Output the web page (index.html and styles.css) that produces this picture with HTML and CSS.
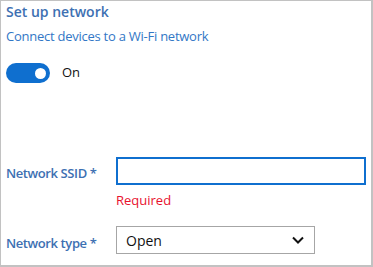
FILE: index.html
```html
<!DOCTYPE html>
<html lang="en">
<head>
    <meta charset="UTF-8">
    <meta name="viewport" content="width=device-width, initial-scale=1.0">
    <title>Set up network</title>
    <link rel="stylesheet" href="styles.css">
</head>
<body>
    <div class="panel">
        <h1 class="titel">Set up network</h1>
        <p class="untertitel">Connect devices to a Wi-Fi network</p>

        <div class="schalter-zeile">
            <span class="schalter"><span class="knopf"></span></span>
            <span class="schalter-text">On</span>
        </div>

        <div class="feld feld-ssid">
            <label class="feld-label" for="ssid">Network SSID<span class="stern">*</span></label>
            <div class="feld-inhalt">
                <input class="eingabe" id="ssid" type="text">
                <div class="fehler">Required</div>
            </div>
        </div>

        <div class="feld feld-typ">
            <label class="feld-label">Network type<span class="stern">*</span></label>
            <div class="auswahl">
                <span>Open</span>
                <svg width="12" height="8" viewBox="0 0 12 8">
                    <path d="M1 1.5 L6 6.5 L11 1.5" fill="none" stroke="#111" stroke-width="2"/>
                </svg>
            </div>
        </div>
    </div>
</body>
</html>
```

FILE: styles.css
```css
body {
    margin: 0;
    font-family: "Open Sans", "Noto Sans", sans-serif;
    background-color: white;
}

.panel {
    box-sizing: border-box;
    width: 373px;
    height: 267px;
    padding: 1px 5px 0 5px;
    border: 1px solid #c2c2c2;
    border-right-width: 2px;
    border-bottom-width: 2px;
    display: flex;
    flex-direction: column;
}

.titel {
    margin: 0;
    font-size: 14px;
    line-height: 20px;
    font-weight: 600;
    color: #3d70b2;
}

.untertitel {
    margin: 5px 0 0 0;
    font-size: 13px;
    line-height: 18px;
    letter-spacing: -0.25px;
    color: #3277c6;
}

.schalter-zeile {
    margin-top: 18px;
    display: flex;
    align-items: flex-start;
}

.schalter {
    width: 44px;
    height: 20px;
    border-radius: 10px;
    background-color: #0f6fcf;
    display: flex;
    align-items: center;
    justify-content: flex-end;
    padding-right: 4px;
    box-sizing: border-box;
}

.knopf {
    width: 11px;
    height: 11px;
    border-radius: 50%;
    background-color: white;
}

.schalter-text {
    margin-left: 12px;
    font-size: 13px;
    line-height: 18px;
    color: #111;
}

.feld {
    display: flex;
    align-items: flex-start;
}

.feld-ssid {
    margin-top: 74px;
}

.feld-typ {
    margin-top: 17px;
}

.feld-label {
    width: 110px;
    flex-shrink: 0;
    font-size: 13px;
    line-height: 18px;
    letter-spacing: -0.4px;
    font-weight: 600;
    color: #3d70b2;
    padding-top: 7px;
}

.stern {
    margin-left: 3px;
}

.feld-typ .feld-label {
    padding-top: 8px;
}

.eingabe {
    box-sizing: border-box;
    width: 250px;
    height: 28px;
    margin: 0;
    border: 2px solid #0f6fcf;
    outline: none;
    font-family: inherit;
}

.fehler {
    margin-top: 6px;
    font-size: 13px;
    line-height: 18px;
    color: #e8112d;
}

.auswahl {
    box-sizing: border-box;
    width: 199px;
    height: 28px;
    border: 1px solid #a6a6a6;
    display: flex;
    align-items: center;
    justify-content: space-between;
    padding: 0 10px 0 9px;
    font-size: 14px;
    color: #111;
}
```
